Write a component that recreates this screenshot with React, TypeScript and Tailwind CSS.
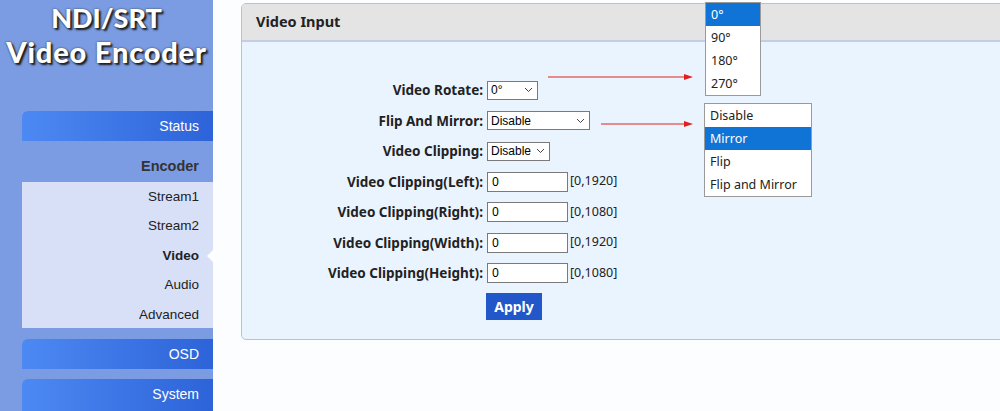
import React from 'react';

const font = { fontFamily: '"Noto Sans", "Open Sans", Arial, sans-serif' };
const arial = { fontFamily: '"Liberation Sans", Arial, sans-serif' };

function Chevron() {
  return (
    <svg width="9" height="6" viewBox="0 0 9 6" className="shrink-0">
      <path d="M1 1l3.5 3.5L8 1" fill="none" stroke="#444" strokeWidth="1" />
    </svg>
  );
}

function Select({ value, width }: { value: string; width: string }) {
  return (
    <div className={`${width} h-[19px] bg-white border border-[#7a7a7a] flex items-center justify-between gap-[4px] pl-[3px] pr-[4px] text-[12px] text-black`} style={arial}>
      <span>{value}</span>
      <Chevron />
    </div>
  );
}

function Row({ label, children }: { label: string; children: React.ReactNode }) {
  return (
    <div className="flex items-center h-[30.5px]">
      <div className="w-[245px] text-right pr-[4px] font-bold text-[13.5px] text-[#222]">{label}</div>
      {children}
    </div>
  );
}

function NumInput({ range }: { range: string }) {
  return (
    <>
      <div className="w-[81px] h-[20px] bg-white border border-[#7a7a7a] text-[12px] pl-[4px] leading-[18px] text-black">0</div>
      <span className="ml-[2px] text-[12.5px] text-[#222]">{range}</span>
    </>
  );
}

export default function App() {
  const subItems = ['Stream1', 'Stream2', 'Video', 'Audio', 'Advanced'];
  return (
    <div className="w-[1000px] h-[411px] overflow-hidden flex bg-[#fbfdff] relative" style={font}>
      {/* Sidebar */}
      <aside className="w-[213px] shrink-0 bg-[#7b9ce2] flex flex-col">
        <div className="h-[111px] flex flex-col items-center text-white font-black [text-shadow:2px_2px_2px_#1a1a1a,0_0_2px_#333]" style={{ fontFamily: 'Lato, "Open Sans", sans-serif' }}>
          <div className="text-[27px] leading-[34px] mt-[1px]">NDI/SRT</div>
          <div className="text-[29px] leading-[34px] tracking-[0.8px]">Video Encoder</div>
        </div>
        <div className="ml-[22px] flex flex-col" style={arial}>
          <div className="h-[30px] rounded-tl-[6px] bg-gradient-to-r from-[#4d89f3] to-[#2d63d8] text-white text-[14px] text-right pr-[14px] leading-[30px]">Status</div>
          <div className="h-[41px] text-right pr-[14px] font-bold text-[14.5px] text-[#333] leading-[50px]">Encoder</div>
          <div className="bg-[#d7e0f7] h-[146px] flex flex-col">
            {subItems.map(s => (
              <div key={s} className={`relative h-[29.4px] leading-[29.4px] text-right pr-[14px] text-[13.5px] text-[#222] ${s === 'Video' ? 'font-bold' : ''}`}>
                {s}
                {s === 'Video' && (
                  <span className="absolute right-0 top-[9px] w-0 h-0 border-y-[6px] border-y-transparent border-r-[6px] border-r-white" />
                )}
              </div>
            ))}
          </div>
          <div className="mt-[11px] h-[30px] rounded-tl-[6px] bg-gradient-to-r from-[#4d89f3] to-[#2d63d8] text-white text-[14px] text-right pr-[14px] leading-[30px]">OSD</div>
          <div className="mt-[10px] h-[32px] rounded-tl-[6px] bg-gradient-to-r from-[#4d89f3] to-[#2d63d8] text-white text-[14px] text-right pr-[14px] leading-[30px]">System</div>
        </div>
      </aside>

      {/* Main */}
      <main className="flex-1 pl-[28px] pt-[3px]">
        <div className="w-[800px] h-[337px] border border-[#b6c2dc] rounded-l-[5px] bg-[#eaf4ff] flex flex-col overflow-hidden">
          <div className="h-[38px] bg-[#e4e4e4] border-b-2 border-[#c4cde3] flex items-center pl-[14px] font-bold text-[14.5px] text-[#222]">Video Input</div>
          <div className="pt-[33px] flex flex-col">
            <Row label="Video Rotate:"><Select value="0°" width="w-[51px]" /></Row>
            <Row label="Flip And Mirror:"><Select value="Disable" width="w-[103px]" /></Row>
            <Row label="Video Clipping:"><Select value="Disable" width="w-[63px]" /></Row>
            <Row label="Video Clipping(Left):"><NumInput range="[0,1920]" /></Row>
            <Row label="Video Clipping(Right):"><NumInput range="[0,1080]" /></Row>
            <Row label="Video Clipping(Width):"><NumInput range="[0,1920]" /></Row>
            <Row label="Video Clipping(Height):"><NumInput range="[0,1080]" /></Row>
            <div className="pl-[244px] mt-[4px]">
              <div className="w-[56px] h-[27px] bg-[#2257c9] text-white font-bold text-[14px] flex items-center justify-center">Apply</div>
            </div>
          </div>
        </div>
      </main>

      {/* Arrows */}
      <svg className="absolute left-0 top-0 pointer-events-none" width="1000" height="411">
        <line x1="548" y1="77" x2="684" y2="77" stroke="#e0201c" strokeWidth="1.2" />
        <polygon points="684,74 693,77 684,80" fill="#e0201c" />
        <line x1="601" y1="124" x2="684" y2="124" stroke="#e0201c" strokeWidth="1.2" />
        <polygon points="684,121 693,124 684,127" fill="#e0201c" />
      </svg>

      {/* Dropdown lists */}
      <div className="absolute left-[705px] top-[2px] w-[56px] bg-white border border-[#9a9a9a] text-[12.5px] text-[#222]">
        <div className="h-[23px] leading-[23px] pl-[5px] bg-[#0f74d6] text-white">0°</div>
        <div className="h-[23px] leading-[23px] pl-[5px]">90°</div>
        <div className="h-[23px] leading-[23px] pl-[5px]">180°</div>
        <div className="h-[23px] leading-[23px] pl-[5px]">270°</div>
      </div>
      <div className="absolute left-[704px] top-[103px] w-[108px] bg-white border border-[#9a9a9a] text-[12.5px] text-[#222]">
        <div className="h-[23px] leading-[23px] pl-[5px]">Disable</div>
        <div className="h-[23px] leading-[23px] pl-[5px] bg-[#0f74d6] text-white">Mirror</div>
        <div className="h-[23px] leading-[23px] pl-[5px]">Flip</div>
        <div className="h-[23px] leading-[23px] pl-[5px]">Flip and Mirror</div>
      </div>
    </div>
  );
}
